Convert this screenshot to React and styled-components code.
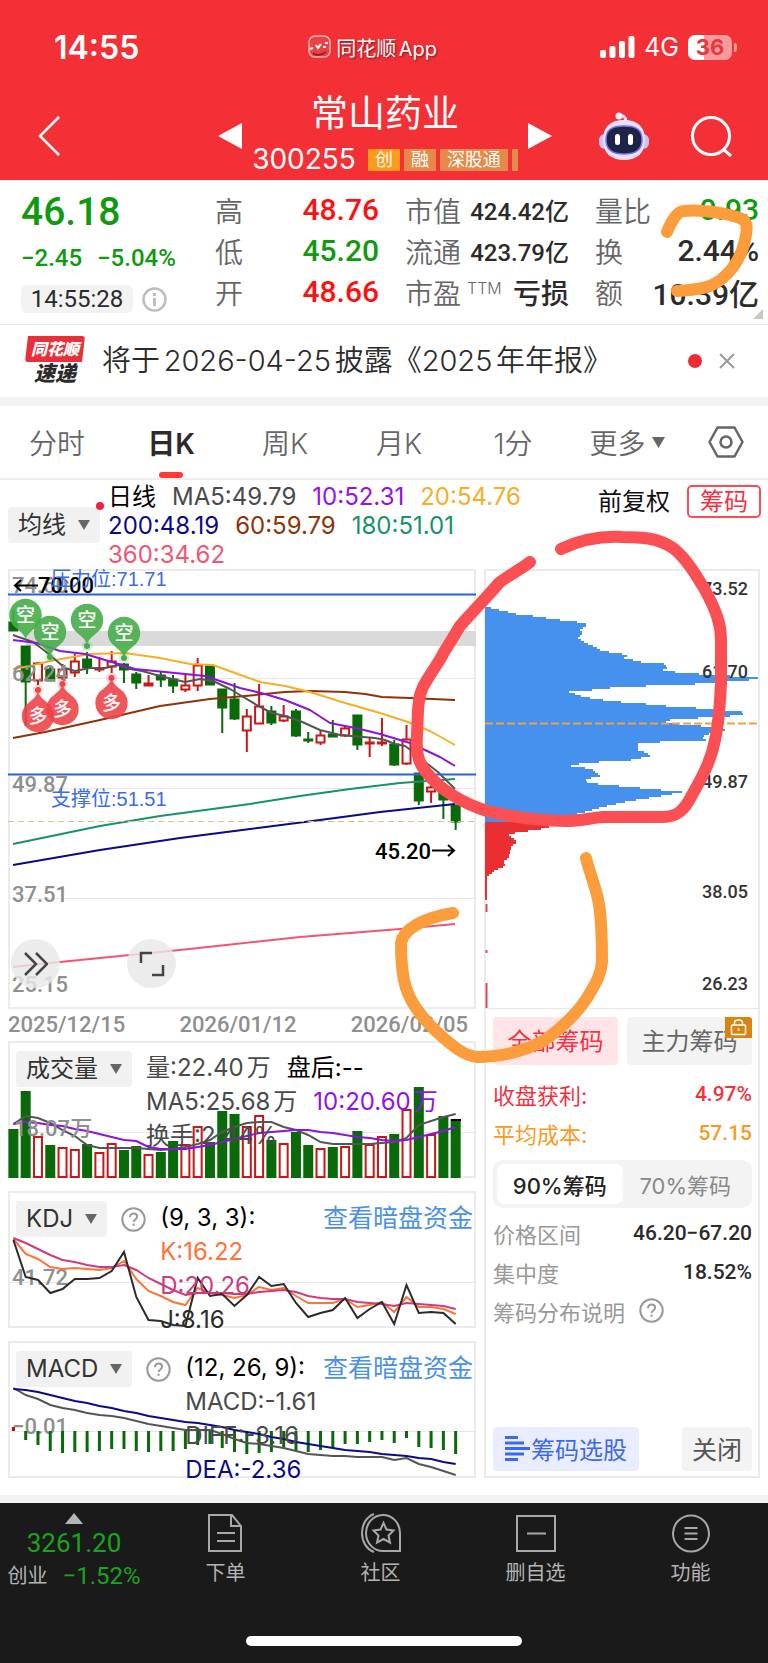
import React from 'react'
import styled, { createGlobalStyle } from 'styled-components'

const GlobalStyle = createGlobalStyle`
:root {
  --red: #f23036;
  --up: #ff1010;
  --down: #0f9a0f;
  --ink: #2b2b2b;
  --grey: #666666;
  --soft: #f3f3f3;
  --line: #e6e6e6;
  --text: Inter, 'Noto Sans CJK SC', sans-serif;
  --digits: Roboto, 'Noto Sans CJK SC', sans-serif;
}

*,
*::before,
*::after {
  box-sizing: border-box;
  margin: 0;
  padding: 0;
}

body {
  background: #ffffff;
  color: var(--ink);
  font-family: var(--text);
}

button {
  border: 0;
  background: none;
  color: inherit;
  font: inherit;
  cursor: pointer;
}

a {
  color: inherit;
  text-decoration: none;
}

svg {
  display: block;
}
`

const Page = styled.div`
  position: relative;
  width: 100%;
  overflow: hidden;
  white-space: nowrap;
`

/* Header */
const Header = styled.header`
  height: 180px;
  background: var(--red);
  color: #ffffff;
`

const StatusBar = styled.div`
  display: grid;
  grid-template-columns: 255fr auto 296fr;
  align-items: center;
  height: 94px;
  padding: 0 36px 0 54px;
`

const Clock = styled.span`
  font-size: 32px;
  font-weight: 600;
`

const AppName = styled.span`
  display: flex;
  align-items: center;
  gap: 4px;
  font-size: 20px;
  text-shadow: 1px 1px 2px rgba(0, 0, 0, 0.5);
  text-autospace: normal;
`

const Signals = styled.div`
  display: flex;
  align-items: center;
  justify-content: flex-end;
  gap: 9px;
  font-size: 25px;
`

const Battery = styled.span`
  position: relative;
  width: 44px;
  height: 25px;
  border-radius: 7px;
  background: linear-gradient(90deg, #ffffff 36%, #f99a9d 36%);
  color: #e8383e;
  font-size: 22px;
  font-weight: 700;
  line-height: 25px;
  text-align: center;

  &&::after {
    content: '';
    position: absolute;
    left: 46px;
    top: 8px;
    width: 3px;
    height: 9px;
    border-radius: 0 3px 3px 0;
    background: #f99a9d;
  }
`

const TitleBar = styled.div`
  display: grid;
  grid-template-columns: 1fr auto 1fr;
  align-items: center;
  height: 82px;
  padding: 0 36px 0 38px;
`

const TitleGroup = styled.div`
  display: flex;
  align-items: center;
  gap: 10px;
`

const StockTitle = styled.div`
  display: flex;
  flex-direction: column;
  align-items: center;
  gap: 7px;
`

const StockName = styled.h1`
  font-size: 37px;
  font-weight: 400;
  line-height: 40px;
`

const StockCode = styled.div`
  display: flex;
  align-items: center;
  gap: 4px;
  font-size: 28px;
  line-height: 37px;

  && > span:first-child {
    margin-right: 8px;
  }
`

const Tag = styled.span`
  height: 22px;
  padding: 0 ${(p) => (p.$cut ? 3 : 7)}px;
  background: ${(p) => (p.$solid ? '#ff9a1a' : '#e58a48')};
  font-size: 18px;
  line-height: 22px;
`

const TitleActions = styled.div`
  display: flex;
  align-items: center;
  justify-content: flex-end;
  gap: 42px;
`

const IconButton = styled.button`
  display: grid;
  place-items: center;
  justify-self: start;
`

/* Quote */
const Quote = styled.section`
  position: relative;
  display: grid;
  grid-template-columns: 168fr repeat(3, 164fr);
  gap: 26px;
  height: 145px;
  padding: 9px 9px 0 21px;
  border-bottom: 1px solid var(--line);
`

const PriceBlock = styled.div`
  color: var(--down);
  font-family: var(--digits);
  font-weight: 500;
`

const Price = styled.div`
  font-size: 39px;
  line-height: 46px;
`

const Change = styled.div`
  display: flex;
  gap: 15px;
  font-size: 24px;
  line-height: 46px;
`

const TimeRow = styled.div`
  display: flex;
  align-items: center;
  gap: 9px;
  height: 36px;
`

const TimePill = styled.span`
  width: 112px;
  border-radius: 6px;
  background: var(--soft);
  color: var(--ink);
  font-size: 24px;
  font-weight: 400;
  line-height: 28px;
  text-align: center;
`

const StatList = styled.dl`
  display: flex;
  flex-direction: column;
`

const Stat = styled.div`
  display: flex;
  align-items: center;
  justify-content: space-between;
  height: 41px;
`

const StatLabel = styled.dt`
  display: flex;
  color: var(--grey);
  font-size: 28px;
  font-weight: 350;

  && sup {
    margin-left: 6px;
    font-size: 16px;
    line-height: 32px;
    align-self: flex-start;
  }
`

const StatValue = styled.dd`
  color: ${(p) => p.$color || 'var(--ink)'};
  font-family: var(--digits);
  font-size: ${(p) => p.$size || 30}px;
  font-weight: 500;
`

const Corner = styled.span`
  position: absolute;
  right: 5px;
  bottom: 5px;
  border-left: 10px solid transparent;
  border-bottom: 10px solid #c8c8c8;
`

/* News */
const News = styled.section`
  display: flex;
  align-items: center;
  height: 81px;
  padding: 0 33px 0 25px;
  border-bottom: 9px solid var(--soft);
  font-size: 29px;
  font-weight: 350;
`

const NewsLogo = styled.div`
  display: flex;
  flex-direction: column;
  align-items: center;
  width: 60px;
  margin-right: 17px;
  font-style: italic;
  font-weight: 900;
`

const LogoTop = styled.span`
  position: relative;
  width: 60px;
  border-radius: 3px;
  background: #e8303a;
  color: #ffffff;
  font-size: 16px;
  line-height: 26px;
  text-align: center;
  clip-path: polygon(5% 0, 100% 0, 95% 100%, 0 100%);
`

const LogoBottom = styled.span`
  font-size: 21px;
  line-height: 24px;
`

const NewsText = styled.a`
  flex: 1;
  line-height: 40px;
  text-autospace: normal;
`

const RedDot = styled.span`
  width: 14px;
  height: 14px;
  margin-right: 17px;
  border-radius: 50%;
  background: #ee2b30;
`

/* Period tabs */
const Periods = styled.nav`
  display: grid;
  grid-template-columns: repeat(6, 114fr) 84fr;
  height: 74px;
  border-bottom: 2px solid #eeeeee;
`

const Period = styled.button`
  position: relative;
  display: flex;
  align-items: center;
  justify-content: center;
  gap: 6px;
  color: ${(p) => (p.$active ? 'var(--ink)' : 'var(--grey)')};
  font-size: 28px;
  font-weight: ${(p) => (p.$active ? 600 : 350)};

  &&::after {
    content: '';
    display: ${(p) => (p.$active ? 'block' : 'none')};
    position: absolute;
    bottom: 0;
    width: 24px;
    height: 6px;
    border-radius: 3px;
    background: #ff3b36;
  }
`

/* Moving average legend */
const Averages = styled.section`
  display: flex;
  align-items: flex-start;
  gap: 8px;
  height: 89px;
  padding: 2px 7px 0 8px;
`

const Picker = styled.button`
  position: relative;
  display: flex;
  align-items: center;
  gap: 12px;
  height: 36px;
  padding: 0 10px;
  border-radius: 4px;
  background: #f1f1f1;
  color: #333333;
  font-size: 24px;
  line-height: 36px;
`

const AveragePicker = styled(Picker)`
  width: 92px;
  margin-top: 25px;

  &&::after {
    content: '';
    position: absolute;
    right: -4px;
    top: -5px;
    width: 8px;
    height: 8px;
    border-radius: 50%;
    background: #f5203a;
  }
`

const AverageRows = styled.div`
  flex: 1;
`

const LegendRow = styled.div`
  display: flex;
  gap: 16px;
  height: ${(p) => p.$height || 29}px;
  font-size: 24px;
  line-height: ${(p) => p.$height || 29}px;
  text-autospace: normal;
`

const Value = styled.span`
  color: ${(p) => p.$color};
`

const AdjustButton = styled.button`
  margin: 4px 9px 0 0;
  color: #111111;
  font-size: 24px;
  line-height: 32px;
`

const ChipButton = styled.button`
  width: 74px;
  height: 33px;
  margin-top: 3px;
  border: 2px solid #ff4a55;
  border-radius: 5px;
  color: #f5303f;
  font-size: 24px;
  line-height: 28px;
`

/* Charts */
const Charts = styled.main`
  display: grid;
  grid-template-columns: 468fr 276fr;
  gap: 8px;
  padding: 0 8px 17px;
  border-bottom: 8px solid var(--soft);
`

const ChartColumn = styled.div`
  display: flex;
  flex-direction: column;
  min-width: 0;
`

const PricePanel = styled.div`
  position: relative;
  box-shadow: inset 0 0 0 2px #ebebeb;

  && > svg {
    width: 100%;
    height: auto;
  }
`

const ToolButtons = styled.div`
  position: absolute;
  left: 3px;
  bottom: 21px;
  display: flex;
  gap: 67px;
`

const RoundTool = styled.button`
  display: grid;
  place-items: center;
  width: 49px;
  height: 49px;
  border-radius: 50%;
  background: rgba(232, 232, 232, 0.82);
`

const Dates = styled.div`
  display: flex;
  justify-content: space-between;
  padding-right: 8px;
  color: #8f8f8f;
  font-family: var(--digits);
  font-size: 22px;
  font-weight: 500;
  line-height: 32px;
`

const Indicator = styled.section`
  position: relative;
  height: 137px;
  padding: 10px 3px 0 8px;
  box-shadow: inset 0 0 0 2px #ebebeb;

  && + & {
    margin-top: 13px;
  }

  && > svg {
    position: absolute;
    inset: 0;
    width: 100%;
    height: 100%;
  }
`

const IndicatorBody = styled.div`
  position: relative;
  display: flex;
  align-items: flex-start;
  gap: 14px;
`

const Lines = styled.div`
  flex: 1;
`

const DarkLink = styled.a`
  margin-left: auto;
  color: #4a90e8;
  font-size: 25px;
`

const HelpButton = styled.button`
  height: 36px;
`

const AxisText = styled.text`
  fill: ${(p) => p.$fill || '#8f8f8f'};
  font-family: var(--digits);
  font-size: ${(p) => p.$size || 22}px;
  font-weight: 500;
`

const LevelText = styled.text`
  fill: #3a6be8;
  font-family: 'Liberation Sans', 'Noto Sans CJK SC', sans-serif;
  font-size: 20px;
`

const PinText = styled.text`
  fill: #ffffff;
  font-family: 'Noto Sans CJK SC', sans-serif;
  font-size: 19px;
  font-weight: 500;
  text-anchor: middle;
`

/* Chip distribution */
const ChipColumn = styled.aside`
  display: flex;
  flex-direction: column;
  min-width: 0;
  box-shadow: inset 0 0 0 2px #ebebeb;

  && > svg {
    width: 100%;
    height: auto;
  }
`

const ChipInfo = styled.div`
  display: flex;
  flex: 1;
  flex-direction: column;
  padding: 8px 8px 7px 9px;
`

const ChipTabs = styled.div`
  display: grid;
  grid-template-columns: 1fr 1fr;
  gap: 9px;
  margin-bottom: 9px;
`

const ChipTab = styled.button`
  position: relative;
  height: 48px;
  padding-bottom: 4px;
  border-radius: 4px;
  background: ${(p) => (p.$active ? '#ffe5e8' : 'var(--soft)')};
  color: ${(p) => (p.$active ? '#f5303f' : 'var(--grey)')};
  font-size: 24px;

  && > svg {
    position: absolute;
    right: 0;
    top: 0;
  }
`

const ChipRow = styled.div`
  display: flex;
  align-items: center;
  justify-content: space-between;
  height: 39px;
  color: ${(p) => p.$color || '#999999'};
  font-size: 22px;

  && strong {
    color: ${(p) => p.$color || 'var(--ink)'};
    font-family: var(--digits);
    font-size: 21px;
    font-weight: 500;
  }
`

const HelpRow = styled(ChipRow)`
  justify-content: flex-start;
  gap: 14px;
`

const Segments = styled.div`
  display: grid;
  grid-template-columns: 1fr 1fr;
  height: 48px;
  margin: 8px 0 5px;
  padding: 4px;
  border-radius: 10px;
  background: var(--soft);
`

const Segment = styled.button`
  border-radius: 8px;
  background: ${(p) => (p.$active ? '#ffffff' : 'transparent')};
  color: ${(p) => (p.$active ? '#222222' : '#888888')};
  font-size: 22px;
  font-weight: ${(p) => (p.$active ? 500 : 400)};
  text-autospace: normal;
`

const ChipFooter = styled.div`
  display: flex;
  justify-content: space-between;
  margin-top: auto;
`

const FooterButton = styled.button`
  display: flex;
  align-items: center;
  gap: 1px;
  height: 44px;
  padding: 0 ${(p) => (p.$primary ? 12 : 10)}px 2px;
  border-radius: 4px;
  background: ${(p) => (p.$primary ? '#e9edff' : 'var(--soft)')};
  color: ${(p) => (p.$primary ? '#3d68f0' : '#555555')};
  font-size: ${(p) => (p.$primary ? 24 : 25)}px;
`

/* Bottom bar */
const BottomBar = styled.footer`
  height: 160px;
  background: #1a1a1a;
  color: #b4b4b4;
`

const BottomItems = styled.nav`
  display: grid;
  grid-template-columns: 148fr repeat(4, 155fr);
  height: 133px;
`

const IndexTicker = styled.a`
  display: flex;
  flex-direction: column;
  align-items: center;
  padding-top: 10px;
  color: #19a519;
  font-family: var(--digits);
  font-size: 26px;
  line-height: 38px;
`

const IndexLine = styled.span`
  display: flex;
  align-items: center;
  gap: 15px;
  font-size: 24px;
  line-height: 28px;

  && small {
    color: #b4b4b4;
    font-size: 20px;
  }
`

const BottomItem = styled.button`
  display: flex;
  flex-direction: column;
  align-items: center;
  gap: 4px;
  padding-top: 10px;
  font-size: 20px;
  line-height: 32px;
`

const HomeBar = styled.div`
  width: 36%;
  height: 10px;
  margin: 0 auto;
  border-radius: 5px;
  background: #ffffff;
`

/* Hand drawn marks that lie over the page */
const Marks = styled.svg`
  position: absolute;
  inset: 0;
  width: 100%;
  height: 100%;
  pointer-events: none;
`

const GREEN = '#0a6a0a'
const RED = '#cc1515'
const STEP = 12.285
const barX = (i) => 13.4 + i * STEP

const points = (ys) => ys.map((y, i) => `${barX(i).toFixed(1)},${y}`).join(' ')

// [up, body top, body bottom, wick top, wick bottom]
const candles = [
  [0, 622, 631, 610, 631], [0, 646, 682, 646, 726], [1, 663, 681, 662, 685], [0, 669, 681, 665, 681],
  [1, 669, 678, 664, 680], [1, 661, 673, 654, 677], [0, 659, 668, 652, 674], [1, 668, 670, 657, 672],
  [1, 661, 667, 651, 673], [0, 664, 670, 663, 683], [0, 674, 683, 672, 689], [1, 683, 686, 675, 686],
  [0, 675, 680, 671, 687], [0, 679, 686, 675, 693], [1, 685, 690, 675, 692], [1, 665, 686, 658, 691],
  [0, 666, 685, 665, 685], [0, 689, 708, 689, 733], [0, 699, 719, 683, 720], [1, 716, 731, 709, 752],
  [1, 706, 724, 684, 724], [0, 711, 723, 706, 725], [1, 716, 721, 705, 722], [0, 711, 736, 709, 737],
  [0, 739, 741, 732, 743], [1, 735, 743, 730, 745], [0, 734, 737, 720, 737], [1, 728, 736, 726, 737],
  [0, 715, 745, 715, 750], [1, 742, 744, 737, 757], [1, 742, 744, 718, 746], [0, 744, 765, 740, 766],
  [1, 739, 764, 725, 765], [0, 773, 801, 773, 805], [1, 787, 792, 785, 803], [0, 786, 800, 785, 819],
  [0, 805, 822, 805, 830],
]

const averages = [
  ['#16936a', '13,844 100,826 160,816 250,804 300,796 350,789 400,783 455,779'],
  ['#0a0a8c', '13,865 100,850 180,838 250,829 320,820 380,812 455,804'],
  ['#f25570', '13,967 60,962 180,950 300,937 400,929 455,924'],
  ['#8f3208', '13,738 45,732 100,720 160,706 210,699 245,696 285,692 310,691 345,692 365,694 382,697 410,698 455,700'],
  ['#f9ad27', '13,669 30,666 50,661 90,654 125,653 160,658 190,664 213,665 235,673 260,682 285,686 310,692 345,703 380,713 408,722 430,731 455,745'],
  ['#555555', '13,635 33,642 45,651 58,662 65,668 75,671 90,668 105,668 119,665 130,669 142,671 160,676 185,682 200,679 213,681 230,689 245,698 262,708 272,713 285,716 300,721 320,730 340,735 375,738 385,740 395,744 405,746 412,751 425,762 438,772 455,789'],
  ['#8c12e0', '13,640 37,643 60,651 85,654 105,660 135,669 165,672 205,676 220,681 240,688 265,694 285,700 310,710 330,723 360,729 380,734 410,743 425,750 440,757 455,766'],
]

const volume = [
  1129, 1091, 1136, 1145, 1147, 1149, 1144, 1152, 1143, 1150, 1146, 1154, 1152, 1141, 1144, 1126, 1142, 1111, 1114,
  1126, 1115, 1140, 1143, 1132, 1145, 1148, 1147, 1146, 1131, 1144, 1136, 1134, 1109, 1087, 1134, 1116, 1119,
]
const volumeUp = [2, 4, 5, 7, 8, 11, 14, 15, 19, 20, 22, 25, 27, 29, 30, 32, 34]
const volume5 = [
  1124, 1116, 1118, 1123, 1130, 1136, 1145, 1148, 1148, 1148, 1148, 1149, 1150, 1149, 1147, 1144, 1140, 1132, 1127,
  1123, 1122, 1122, 1127, 1130, 1135, 1142, 1144, 1144, 1144, 1144, 1143, 1142, 1138, 1125, 1121, 1117, 1114,
]
const volume10 = [
  1124, 1122, 1123, 1125, 1126, 1129, 1131, 1134, 1137, 1140, 1141, 1147, 1149, 1149, 1149, 1147, 1145, 1142, 1139,
  1136, 1133, 1132, 1131, 1130, 1130, 1132, 1133, 1135, 1137, 1138, 1140, 1141, 1140, 1137, 1134, 1131, 1127,
]

const kdj = {
  k: [
    1239, 1254, 1259, 1267, 1269, 1268, 1269, 1270, 1268, 1261, 1279, 1291, 1296, 1302, 1305, 1288, 1293, 1295, 1298,
    1295, 1287, 1290, 1288, 1296, 1303, 1303, 1303, 1299, 1307, 1305, 1302, 1312, 1297, 1307, 1307, 1309, 1314,
  ],
  d: [
    1238, 1243, 1249, 1255, 1260, 1262, 1265, 1267, 1267, 1265, 1270, 1278, 1284, 1290, 1295, 1293, 1293, 1293, 1294,
    1294, 1292, 1291, 1290, 1292, 1296, 1298, 1299, 1299, 1302, 1303, 1304, 1306, 1303, 1304, 1305, 1306, 1309,
  ],
  j: [
    1240, 1277, 1280, 1293, 1289, 1279, 1279, 1278, 1271, 1252, 1297, 1320, 1321, 1325, 1326, 1278, 1296, 1294, 1306,
    1295, 1277, 1286, 1284, 1303, 1317, 1313, 1310, 1298, 1318, 1309, 1302, 1324, 1285, 1313, 1312, 1313, 1324,
  ],
}

const macd = {
  bars: [
    1427, 1440, 1445, 1451, 1453, 1452, 1452, 1451, 1449, 1449, 1451, 1452, 1451, 1451, 1449, 1445, 1444, 1448, 1452,
    1454, 1453, 1452, 1448, 1451, 1452, 1450, 1448, 1444, 1444, 1442, 1440, 1443, 1438, 1447, 1448, 1450, 1454,
  ],
  diff: [
    1388, 1395, 1399, 1405, 1408, 1410, 1413, 1415, 1416, 1418, 1421, 1424, 1426, 1428, 1430, 1430, 1430, 1434, 1439,
    1443, 1444, 1446, 1448, 1451, 1454, 1455, 1456, 1456, 1457, 1457, 1457, 1460, 1458, 1464, 1467, 1471, 1475,
  ],
  dea: [
    1389, 1390, 1392, 1395, 1398, 1401, 1403, 1406, 1408, 1411, 1413, 1416, 1418, 1420, 1422, 1423, 1425, 1427, 1430,
    1432, 1434, 1437, 1439, 1442, 1444, 1446, 1448, 1450, 1451, 1452, 1454, 1455, 1456, 1458, 1459, 1462, 1464,
  ],
}

// holders per price level: [width, y]
const trapped = [
  [0, 607], [6, 608], [31, 614], [56, 617], [66, 619], [101, 623], [101, 627], [94, 629], [98, 633], [93, 638],
  [101, 643], [110, 647], [117, 651], [143, 655], [139, 658], [156, 662], [179, 664], [182, 668], [178, 670],
  [196, 673], [231, 675], [273, 678], [264, 680], [237, 682], [196, 685], [161, 686], [134, 687], [107, 690],
  [84, 692], [99, 697], [124, 701], [161, 704], [191, 707], [231, 709], [257, 712], [258, 714], [239, 717],
  [187, 719], [181, 722], [201, 725], [231, 727], [244, 729], [231, 732], [224, 734], [217, 737], [221, 740],
  [196, 741], [153, 743], [153, 750], [162, 753], [165, 756], [146, 760], [124, 761], [94, 764], [86, 766],
  [107, 769], [115, 776], [101, 779], [102, 783], [134, 786], [166, 789], [197, 792], [171, 797], [144, 801],
  [117, 807], [97, 813], [74, 818], [68, 822],
]
const winning = [
  [68, 822], [64, 827], [56, 829], [37, 832], [23, 834], [32, 842], [26, 847], [24, 857], [18, 862], [20, 866],
  [9, 871], [2, 877], [2, 900],
]

const stepPath = (levels) => {
  const end = levels[levels.length - 1][1]
  let d = `M485,${levels[0][1]}`
  for (let y = levels[0][1]; y < end; y += 2) {
    const n = levels.findIndex((l) => l[1] > y + 1)
    const b = levels[n === -1 ? levels.length - 1 : n]
    const a = levels[n === -1 ? levels.length - 1 : Math.max(n - 1, 0)]
    const t = b[1] === a[1] ? 0 : (y + 1 - a[1]) / (b[1] - a[1])
    const w = a[0] + (b[0] - a[0]) * t
    d += `H${Math.round(485 + w)}V${Math.min(y + 2, end)}`
  }
  return `${d}H485Z`
}

const Caret = ({ size = 12 }) => (
  <svg width={size} height={size - 2} viewBox="0 0 12 10" aria-hidden="true">
    <path d="M0 0h12L6 10z" fill="#666" />
  </svg>
)

const Question = () => (
  <svg width="25" height="25" viewBox="0 0 25 25" fill="none" stroke="#999" strokeWidth="2" aria-hidden="true">
    <circle cx="12.5" cy="12.5" r="11.2" />
    <path d="M9 10.2c0-2.3 1.5-3.6 3.6-3.6s3.5 1.3 3.5 3.2c0 2.6-3.5 2.7-3.5 5.3" />
    <path d="M12.6 16.6v2.2" />
  </svg>
)

const Pin = ({ x, y, up, label }) => (
  <g>
    <path
      transform={`translate(${x} ${y}) scale(1 ${up ? -1 : 1})`}
      d="M0 24C-2 19-5 17-9 13.5A16.2 16.2 0 1 1 9 13.5C5 17 2 19 0 24z"
      fill={up ? '#ee4448' : '#46ad4a'}
      opacity="0.9"
    />
    <PinText x={x} y={y + 7}>{label}</PinText>
  </g>
)

const PinDot = ({ x, y, fill }) => (
  <g fill={fill}>
    <circle cx={x} cy={y} r="5.5" opacity="0.2" />
    <circle cx={x} cy={y} r="3" />
  </g>
)

const PriceChart = () => (
  <svg viewBox="8 569 468 440" role="img" aria-label="日K线图">
    <path d="M8 678.5H476M8 788.5H476M8 898.5H476" stroke="#e8e8e8" />
    <rect x="26" y="631" width="450" height="15" fill="#dadada" />
    {candles.map(([up, top, bottom, high, low], i) => (
      <g key={i} stroke={up ? RED : GREEN} strokeWidth="2">
        <path d={`M${barX(i)} ${high}V${top}M${barX(i)} ${bottom}V${low}`} />
        <rect x={barX(i) - 4} y={top + 0.5} width="8" height={Math.max(bottom - top - 1, 1)} fill={up ? '#fff' : GREEN} />
      </g>
    ))}
    {averages.map(([color, line]) => (
      <polyline key={color} points={line} fill="none" stroke={color} strokeWidth="2" strokeLinejoin="round" />
    ))}
    <path d="M8 594.5H476M8 774.5H476" stroke="#2c5fe8" strokeWidth="2" />
    <path d="M8 821.5H476" stroke="#d9bd88" strokeDasharray="6 4" />
    <AxisText x="12" y="593">74.60</AxisText>
    <AxisText x="12" y="681">62.24</AxisText>
    <AxisText x="12" y="792">49.87</AxisText>
    <AxisText x="12" y="902">37.51</AxisText>
    <AxisText x="12" y="992">25.15</AxisText>
    <AxisText x="38" y="593" $fill="#000">70.00</AxisText>
    <path d="M38 585.5H15M21 580l-6 5.5 6 5.5" fill="none" stroke="#000" strokeWidth="2" />
    <AxisText x="375" y="859" $fill="#000">45.20</AxisText>
    <path d="M432 850.5H454M448 845l6 5.5-6 5.5" fill="none" stroke="#000" strokeWidth="2" />
    <LevelText x="51" y="586">压力位:71.71</LevelText>
    <LevelText x="51" y="806">支撑位:51.51</LevelText>
    <Pin x={25.5} y={615} label="空" />
    <Pin x={50} y={632} label="空" />
    <Pin x={87} y={620} label="空" />
    <Pin x={124} y={633} label="空" />
    <Pin x={38} y={716} up label="多" />
    <Pin x={62.5} y={709} up label="多" />
    <Pin x={111.5} y={703} up label="多" />
    <PinDot x={50} y={657} fill="#46ad4a" />
    <PinDot x={87} y={646} fill="#46ad4a" />
    <PinDot x={124} y={658} fill="#46ad4a" />
    <PinDot x={38} y={690} fill="#ee4448" />
    <PinDot x={62.5} y={684} fill="#ee4448" />
    <PinDot x={111.5} y={678} fill="#ee4448" />
  </svg>
)

const VolumeChart = () => (
  <svg viewBox="8 1041 468 137" preserveAspectRatio="none" aria-hidden="true">
    <path d="M8 1132.5H476" stroke="#e8e8e8" />
    {volume.map((top, i) =>
      volumeUp.includes(i) ? (
        <rect key={i} x={barX(i) - 4} y={top + 1} width="8" height={1176 - top} fill="#fff" stroke={RED} strokeWidth="2" />
      ) : (
        <rect key={i} x={barX(i) - 5} y={top} width="10" height={1178 - top} fill={GREEN} />
      )
    )}
    <path d="M451 1120h10" stroke="#000" strokeWidth="2" />
    <polyline points={points(volume5)} fill="none" stroke="#555" strokeWidth="2" />
    <polyline points={points(volume10)} fill="none" stroke="#8c12e0" strokeWidth="2" />
    <AxisText x="14" y="1136">18.07万</AxisText>
  </svg>
)

const KdjChart = () => (
  <svg viewBox="8 1191 468 137" preserveAspectRatio="none" aria-hidden="true">
    <path d="M8 1282.5H476" stroke="#e8e8e8" />
    <AxisText x="12" y="1285">41.72</AxisText>
    <polyline points={points(kdj.k)} fill="none" stroke="#ff7336" strokeWidth="2" />
    <polyline points={points(kdj.d)} fill="none" stroke="#cf3b80" strokeWidth="2" />
    <polyline points={points(kdj.j)} fill="none" stroke="#2b2b2b" strokeWidth="2" />
  </svg>
)

const MacdChart = () => (
  <svg viewBox="8 1341 468 137" preserveAspectRatio="none" aria-hidden="true">
    <path d="M8 1431.5H476" stroke="#e8e8e8" />
    <AxisText x="12" y="1434">−0.01</AxisText>
    {macd.bars.map((y, i) => (
      <path key={i} d={`M${barX(i)} 1431V${y}`} stroke={i ? GREEN : '#cc0000'} strokeWidth="3" />
    ))}
    <polyline points={points(macd.diff)} fill="none" stroke="#555" strokeWidth="2" />
    <polyline points={points(macd.dea)} fill="none" stroke="#0a0a8c" strokeWidth="2" />
  </svg>
)

const ChipChart = () => (
  <svg viewBox="484 569 276 440" role="img" aria-label="筹码分布">
    <path d={stepPath(trapped)} fill="#4791ee" />
    <path d={stepPath(winning)} fill="#ea2f32" />
    <path d="M486.5 904v8M486.5 950v3M486.5 983v26" stroke="#e04a4d" strokeWidth="2" />
    <path d="M485 723.5H759" stroke="#f2a13d" strokeWidth="2" strokeDasharray="8 3" />
    <path d="M484 1008.5H760" stroke="#e8e8e8" strokeWidth="1" />
    <AxisText x="702" y="595" $fill="#333" $size={18}>73.52</AxisText>
    <AxisText x="702" y="678" $fill="#333" $size={18}>61.70</AxisText>
    <AxisText x="702" y="788" $fill="#333" $size={18}>49.87</AxisText>
    <AxisText x="702" y="898" $fill="#333" $size={18}>38.05</AxisText>
    <AxisText x="702" y="990" $fill="#333" $size={18}>26.23</AxisText>
  </svg>
)

const Robot = () => (
  <svg width="50" height="50" viewBox="0 0 50 50" aria-hidden="true">
    <path d="M26 12c2-4-1-8-5-7" fill="none" stroke="#e2dcff" strokeWidth="3" strokeLinecap="round" />
    <circle cx="20" cy="5" r="3.5" fill="#f3efff" />
    <rect x="0" y="23" width="50" height="15" rx="6" fill="#c9c4f5" />
    <path d="M25 9c14 0 21 7 21 20S38 49 25 49 4 42 4 29 11 9 25 9z" fill="#e6e2fc" />
    <path d="M25 15c13 0 18 4 18 14s-6 14-18 14S7 39 7 29s5-14 18-14z" fill="#1d2547" stroke="#7a6cf0" strokeWidth="1.5" />
    <rect x="16" y="23" width="5" height="11" rx="2.5" fill="#fff" />
    <rect x="29" y="23" width="5" height="11" rx="2.5" fill="#fff" />
  </svg>
)

const bottomIcons = {
  下单: <path d="M3 2h23l9 11v25H3zM25 2v11h10M11 20h18M11 28h18" />,
  社区: (
    <>
      <path d="M13 1C-3 7-3 33 13 39" />
      <path d="M39 20v18H23A17 18 0 1 1 39 20z" />
      <path d="M22.5 10l3 6.500 7 1-5 5 1.500 7-6.500-3.500-6.500 3.500 1.500-7-5-5 7-1z" />
    </>
  ),
  删自选: <path d="M1 3h38v35H1zM11 20.5h19" />,
  功能: (
    <>
      <circle cx="20" cy="20.5" r="18" />
      <path d="M13.5 15h13M13.5 20.5h13M13.5 26h13" />
    </>
  ),
}

const columns = [
  [
    ['高', '48.76', 'var(--up)'],
    ['低', '45.20', 'var(--down)'],
    ['开', '48.66', 'var(--up)'],
  ],
  [
    ['市值', '424.42亿', null, 24],
    ['流通', '423.79亿', null, 24],
    ['市盈', '亏损', null, 28, 'TTM'],
  ],
  [
    ['量比', '0.93', 'var(--down)'],
    ['换', '2.44%'],
    ['额', '10.39亿'],
  ],
]

export default function App() {
  return (
    <>
      <GlobalStyle />
      <Page>
        <Header>
          <StatusBar>
            <Clock>14:55</Clock>
            <AppName>
              <svg width="24" height="24" viewBox="0 0 24 24" fill="none" aria-hidden="true">
                <rect x="1" y="1" width="21" height="21" rx="6" fill="#ea4347" stroke="#ffb4b4" strokeWidth="1.5" />
                <path d="M2 14l3-1m3-3l2 3 3-4m2 3h3M17 8h3" stroke="#fff" strokeWidth="2" />
                <path d="M5 18c4 3 9 2 13-1" stroke="#b3141a" strokeWidth="2" />
              </svg>
              同花顺App
            </AppName>
            <Signals>
              <svg width="35" height="22" viewBox="0 0 35 22" fill="#fff" aria-hidden="true">
                <rect x="0" y="14" width="6" height="8" rx="2" />
                <rect x="9.5" y="10" width="6" height="12" rx="2" />
                <rect x="19" y="5" width="6" height="17" rx="2" />
                <rect x="28.5" y="0" width="6" height="22" rx="2" />
              </svg>
              <span>4G</span>
              <Battery>36</Battery>
            </Signals>
          </StatusBar>
          <TitleBar>
            <IconButton aria-label="返回">
              <svg width="22" height="40" viewBox="0 0 22 40" fill="none" stroke="#fff" strokeWidth="2.5">
                <path d="M21 1L2 20l19 19" />
              </svg>
            </IconButton>
            <TitleGroup>
              <IconButton aria-label="上一只">
                <svg width="24" height="26" viewBox="0 0 24 26" fill="#fff">
                  <path d="M24 0v26L0 13z" />
                </svg>
              </IconButton>
              <StockTitle>
                <StockName>常山药业</StockName>
                <StockCode>
                  <span>300255</span>
                  <Tag $solid>创</Tag>
                  <Tag>融</Tag>
                  <Tag>深股通</Tag>
                  <Tag $cut />
                </StockCode>
              </StockTitle>
              <IconButton aria-label="下一只">
                <svg width="24" height="26" viewBox="0 0 24 26" fill="#fff">
                  <path d="M0 0v26l24-13z" />
                </svg>
              </IconButton>
            </TitleGroup>
            <TitleActions>
              <IconButton aria-label="智能助手">
                <Robot />
              </IconButton>
              <IconButton aria-label="搜索">
                <svg width="41" height="41" viewBox="0 0 41 41" fill="none" stroke="#fff" strokeWidth="3">
                  <circle cx="20" cy="20" r="18.5" />
                  <path d="M32 33l8 7" />
                </svg>
              </IconButton>
            </TitleActions>
          </TitleBar>
        </Header>

        <Quote>
          <PriceBlock>
            <Price>46.18</Price>
            <Change>
              <span>−2.45</span>
              <span>−5.04%</span>
            </Change>
            <TimeRow>
              <TimePill>14:55:28</TimePill>
              <svg width="25" height="25" viewBox="0 0 25 25" fill="none" stroke="#bdbdbd" strokeWidth="2.5" aria-hidden="true">
                <circle cx="12.5" cy="12.5" r="11" />
                <path d="M12.5 11v8M12.5 6v3" strokeWidth="3" />
              </svg>
            </TimeRow>
          </PriceBlock>
          {columns.map((rows, i) => (
            <StatList key={i}>
              {rows.map(([label, value, color, size, note]) => (
                <Stat key={label}>
                  <StatLabel>
                    {label}
                    {note && <sup>{note}</sup>}
                  </StatLabel>
                  <StatValue $color={color} $size={size}>{value}</StatValue>
                </Stat>
              ))}
            </StatList>
          ))}
          <Corner />
        </Quote>

        <News>
          <NewsLogo>
            <LogoTop>同花顺</LogoTop>
            <LogoBottom>速递</LogoBottom>
          </NewsLogo>
          <NewsText href="#news">将于2026-04-25披露《2025年年报》</NewsText>
          <RedDot />
          <IconButton aria-label="关闭公告">
            <svg width="16" height="16" viewBox="0 0 16 16" stroke="#999" strokeWidth="2">
              <path d="M1 1l14 14M15 1L1 15" />
            </svg>
          </IconButton>
        </News>

        <Periods>
          <Period>分时</Period>
          <Period $active>日K</Period>
          <Period>周K</Period>
          <Period>月K</Period>
          <Period>1分</Period>
          <Period>更多<Caret size={13} /></Period>
          <Period aria-label="设置">
            <svg width="36" height="32" viewBox="0 0 36 32" fill="none" stroke="#666" strokeWidth="2.5">
              <path d="M9.5 1.5h17L34.5 16l-8 14.5h-17L1.5 16z" strokeLinejoin="round" />
              <circle cx="18" cy="16" r="5.5" />
            </svg>
          </Period>
        </Periods>

        <Averages>
          <AveragePicker>均线<Caret /></AveragePicker>
          <AverageRows>
            <LegendRow>
              <Value $color="#000">日线</Value>
              <Value $color="#4a4a4a">MA5:49.79</Value>
              <Value $color="#9410f0">10:52.31</Value>
              <Value $color="#f9ad27">20:54.76</Value>
            </LegendRow>
            <LegendRow>
              <Value $color="#0a0a8c">200:48.19</Value>
              <Value $color="#8f3208">60:59.79</Value>
              <Value $color="#16936a">180:51.01</Value>
            </LegendRow>
            <LegendRow>
              <Value $color="#f25570">360:34.62</Value>
            </LegendRow>
          </AverageRows>
          <AdjustButton>前复权</AdjustButton>
          <ChipButton>筹码</ChipButton>
        </Averages>

        <Charts>
          <ChartColumn>
            <PricePanel>
              <PriceChart />
              <ToolButtons>
                <RoundTool aria-label="展开">
                  <svg width="24" height="24" viewBox="0 0 24 24" fill="none" stroke="#444" strokeWidth="2.5">
                    <path d="M1 1l11 11L1 23M12 1l11 11-11 11" />
                  </svg>
                </RoundTool>
                <RoundTool aria-label="全屏">
                  <svg width="26" height="26" viewBox="0 0 26 26" fill="none" stroke="#444" strokeWidth="2.5">
                    <path d="M2 12V2h11M24 14v10H13" />
                  </svg>
                </RoundTool>
              </ToolButtons>
            </PricePanel>
            <Dates>
              <span>2025/12/15</span>
              <span>2026/01/12</span>
              <span>2026/02/05</span>
            </Dates>
            <Indicator>
              <VolumeChart />
              <IndicatorBody>
                <Picker>成交量<Caret /></Picker>
                <Lines>
                  <LegendRow $height={34}>
                    <Value $color="#4a4a4a">量:22.40万</Value>
                    <Value $color="#000">盘后:--</Value>
                  </LegendRow>
                  <LegendRow $height={34}>
                    <Value $color="#4a4a4a">MA5:25.68万</Value>
                    <Value $color="#9410f0">10:20.60万</Value>
                  </LegendRow>
                  <LegendRow $height={34}>
                    <Value $color="#4a4a4a">换手:2.44%</Value>
                  </LegendRow>
                </Lines>
              </IndicatorBody>
            </Indicator>
            <Indicator>
              <KdjChart />
              <IndicatorBody>
                <Picker>KDJ<Caret /></Picker>
                <HelpButton aria-label="KDJ说明"><Question /></HelpButton>
                <Lines>
                  <LegendRow $height={34}>
                    <Value $color="#000">(9, 3, 3):</Value>
                    <DarkLink href="#dark">查看暗盘资金</DarkLink>
                  </LegendRow>
                  <LegendRow $height={34}><Value $color="#ff7336">K:16.22</Value></LegendRow>
                  <LegendRow $height={34}><Value $color="#cf3b80">D:20.26</Value></LegendRow>
                  <LegendRow $height={34}><Value $color="#2b2b2b">J:8.16</Value></LegendRow>
                </Lines>
              </IndicatorBody>
            </Indicator>
            <Indicator>
              <MacdChart />
              <IndicatorBody>
                <Picker>MACD<Caret /></Picker>
                <HelpButton aria-label="MACD说明"><Question /></HelpButton>
                <Lines>
                  <LegendRow $height={34}>
                    <Value $color="#000">(12, 26, 9):</Value>
                    <DarkLink href="#dark">查看暗盘资金</DarkLink>
                  </LegendRow>
                  <LegendRow $height={34}><Value $color="#4a4a4a">MACD:-1.61</Value></LegendRow>
                  <LegendRow $height={34}><Value $color="#4a4a4a">DIFF:-3.16</Value></LegendRow>
                  <LegendRow $height={34}><Value $color="#0a0a8c">DEA:-2.36</Value></LegendRow>
                </Lines>
              </IndicatorBody>
            </Indicator>
          </ChartColumn>

          <ChipColumn>
            <ChipChart />
            <ChipInfo>
              <ChipTabs>
                <ChipTab $active>全部筹码</ChipTab>
                <ChipTab>
                  主力筹码
                  <svg width="27" height="21" viewBox="0 0 27 21" fill="none" stroke="#fff" strokeWidth="1.5" aria-hidden="true">
                    <path d="M0 0h24a3 3 0 0 1 3 3v18H0z" fill="#d98410" stroke="none" />
                    <rect x="6.5" y="8" width="14" height="9.5" rx="1" />
                    <path d="M9.5 8V5.5a4 2.5 0 0 1 8 0V8M13.5 11v3" />
                  </svg>
                </ChipTab>
              </ChipTabs>
              <ChipRow $color="#f5303f">收盘获利:<strong>4.97%</strong></ChipRow>
              <ChipRow $color="#f99a1f">平均成本:<strong>57.15</strong></ChipRow>
              <Segments>
                <Segment $active>90%筹码</Segment>
                <Segment>70%筹码</Segment>
              </Segments>
              <ChipRow>价格区间<strong>46.20−67.20</strong></ChipRow>
              <ChipRow>集中度<strong>18.52%</strong></ChipRow>
              <HelpRow>筹码分布说明<Question /></HelpRow>
              <ChipFooter>
                <FooterButton $primary>
                  <svg width="25" height="25" viewBox="0 0 25 25" stroke="#3d68f0" strokeWidth="3" aria-hidden="true">
                    <path d="M0 1.5h13M0 7h19M0 12.5h25M0 18h19M0 23.5h13" />
                  </svg>
                  筹码选股
                </FooterButton>
                <FooterButton>关闭</FooterButton>
              </ChipFooter>
            </ChipInfo>
          </ChipColumn>
        </Charts>

        <BottomBar>
          <BottomItems>
            <IndexTicker href="#index">
              <svg width="18" height="11" viewBox="0 0 18 11" fill="#b4b4b4" aria-hidden="true">
                <path d="M9 0l9 11H0z" />
              </svg>
              3261.20
              <IndexLine><small>创业</small>−1.52%</IndexLine>
            </IndexTicker>
            {Object.entries(bottomIcons).map(([label, icon]) => (
              <BottomItem key={label}>
                <svg width="40" height="40" viewBox="0 0 40 40" fill="none" stroke="#a8a8a8" strokeWidth="2">
                  {icon}
                </svg>
                {label}
              </BottomItem>
            ))}
          </BottomItems>
          <HomeBar />
        </BottomBar>

        <Marks viewBox="0 0 768 1663" preserveAspectRatio="none" fill="none" strokeWidth="12" strokeLinecap="round" strokeLinejoin="round" aria-hidden="true">
          <path
            stroke="#fb5053"
            d="M561 549C580 540 602 536 622 537C642 537 658 538 673 548C686 558 696 575 705 590C717 612 721 625 721 640V683C720 705 719 722 715 740C711 762 701 779 692 795C685 809 678 817 663 817H603C590 818 582 821 565 821C540 821 512 817 487 811C465 804 441 791 427 773C417 762 416 750 417 735L418 710C419 698 420 690 427 680C434 668 440 661 444 652C450 643 455 634 460 626C475 609 488 596 499 583C507 576 520 570 530 562"
          />
          <path
            stroke="#fb9d3c"
            d="M586 858C590 875 599 894 600 912C602 930 602 945 602 962C601 976 594 986 587 998C576 1015 560 1029 545 1040C525 1051 500 1057 477 1057C463 1056 449 1043 438 1033C420 1016 408 1000 404 980C401 965 401 955 401 943C403 930 422 918 453 913"
          />
          <path stroke="#fb9d3c" d="M667 232C671 222 677 211 684 211C700 209 728 213 742 219C747 222 748 227 745 240C741 260 728 278 710 286C699 290 688 290 677 291" />
        </Marks>
      </Page>
    </>
  )
}
